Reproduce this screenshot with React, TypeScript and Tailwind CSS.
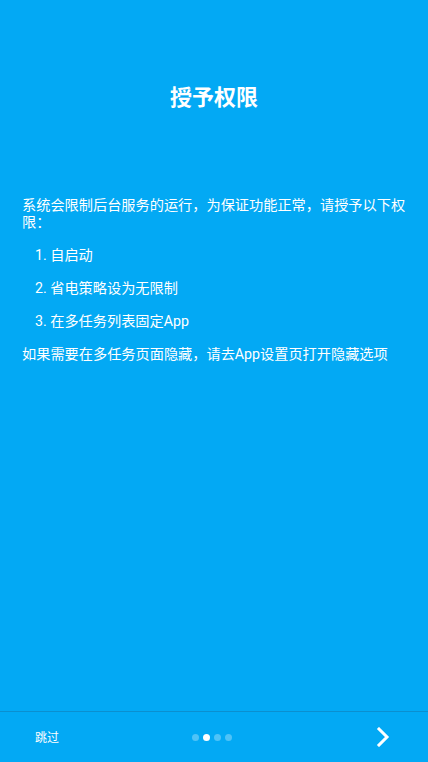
const items = ["1. 自启动", "2. 省电策略设为无限制", "3. 在多任务列表固定App"];

const App = () => {
    const current = 1;
    return (
        <div
            className="w-[428px] h-[762px] bg-[#03a9f4] text-white flex flex-col"
            style={{ fontFamily: 'Roboto, "Noto Sans CJK SC", sans-serif' }}
        >
            <div className="flex-1 flex flex-col">
                {/* 标题 */}
                <h1 className="pt-[85px] text-center text-[22px] leading-[26px] font-bold">授予权限</h1>

                {/* 说明 */}
                <div className="mt-[86px] pl-[22px] pr-[18px] flex flex-col gap-[16px] text-[14.2px] leading-[17px]">
                    <p>系统会限制后台服务的运行，为保证功能正常，请授予以下权限：</p>
                    {items.map((item) => (
                        <p key={item} className="pl-[13px]">{item}</p>
                    ))}
                    <p>如果需要在多任务页面隐藏，请去App设置页打开隐藏选项</p>
                </div>
            </div>

            {/* 底部导航 */}
            <div className="h-[51px] border-t border-[#0b8fcf] flex flex-row items-center justify-between">
                <span className="pl-[35px] w-[100px] text-[12px] leading-[14px] pt-[2px]">跳过</span>
                <div className="flex flex-row gap-[4px] mr-[4px]">
                    {[0, 1, 2, 3].map((i) => (
                        <span
                            key={i}
                            className={i === current ? "w-[7px] h-[7px] rounded-full bg-white" : "w-[7px] h-[7px] rounded-full bg-white/30"}
                        />
                    ))}
                </div>
                <div className="w-[100px] flex justify-end pr-[38px]">
                    <svg width="14" height="20" viewBox="0 0 14 20" fill="none">
                        <path d="M3 2 L11 10 L3 18" stroke="white" strokeWidth="3" strokeLinecap="square" />
                    </svg>
                </div>
            </div>
        </div>
    );
};

export default App;
